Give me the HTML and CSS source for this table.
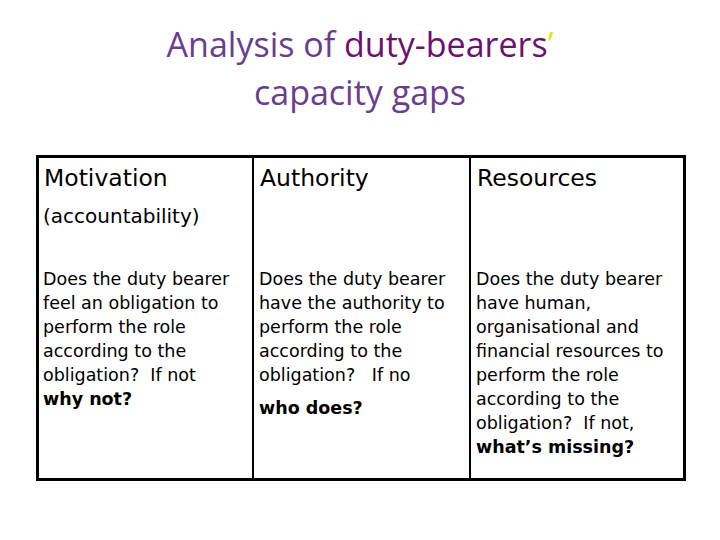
FILE: index.html
```html
<!DOCTYPE html>
<html>
<head>
<meta charset="utf-8">
<link rel="stylesheet" href="styles.css">
</head>
<body>
<div class="slide">
  <h1 class="title"><span class="violet">Analysis of </span><span class="plum">duty-bearers</span><span class="apos">’</span><br><span class="violet">capacity gaps</span></h1>
  <div class="grid">
    <div class="cell head first">
      <div class="h">Motivation</div>
      <div class="sub">(accountability)</div>
    </div>
    <div class="cell head"><div class="h">Authority</div></div>
    <div class="cell head"><div class="h">Resources</div></div>
    <div class="cell body first">
      <p>Does the duty bearer feel an obligation to perform the role according to the obligation?&nbsp; If not<br><b>why not?</b></p>
    </div>
    <div class="cell body">
      <p>Does the duty bearer have the authority to perform the role according to the obligation?&nbsp;&nbsp; If no</p>
      <p class="gap"><b>who does?</b></p>
    </div>
    <div class="cell body">
      <p>Does the duty bearer have human, organisational and financial resources to perform the role according to the obligation?&nbsp; If not,<br><b>what’s missing?</b></p>
    </div>
  </div>
</div>
</body>
</html>
```
FILE: styles.css
```css
html, body {
  margin: 0;
  padding: 0;
  background: #ffffff;
}
.slide {
  width: 720px;
  height: 540px;
}
.title {
  margin: 0;
  padding-top: 20px;
  height: 155px;
  box-sizing: border-box;
  text-align: center;
  font-family: "Open Sans", "Noto Sans", sans-serif;
  font-weight: normal;
  font-size: 34px;
  line-height: 48px;
}
.violet { color: #6a3d91; }
.plum { color: #6e1070; }
.apos { color: #e6e600; }
.grid {
  margin-left: 36px;
  width: 650px;
  height: 326px;
  box-sizing: border-box;
  border: 3px solid #000;
  display: grid;
  grid-template-columns: 213px 217px 1fr;
  grid-template-rows: 109px 1fr;
  font-family: "DejaVu Sans", Verdana, sans-serif;
  color: #000;
}
.cell {
  border-left: 2px solid #000;
  padding-left: 5px;
  padding-right: 4px;
}
.cell.first {
  border-left: none;
  padding-left: 4px;
}
.head {
  padding-top: 5px;
}
.h {
  font-size: 23.5px;
  line-height: 30px;
  padding-left: 1px;
}
.sub {
  font-size: 20px;
  line-height: 28px;
  margin-top: 9px;
}
.body p {
  margin: 0;
  font-size: 17.5px;
  line-height: 24px;
}
.body p.gap {
  margin-top: 9px;
}
```
